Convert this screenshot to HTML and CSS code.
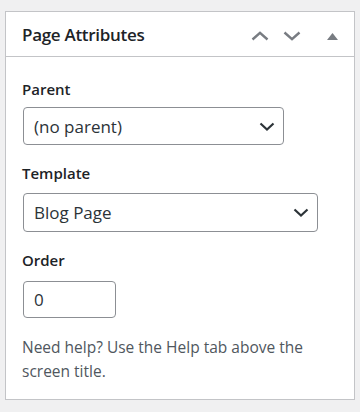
FILE: index.html
```html
<!DOCTYPE html>
<html lang="en">
<head>
    <meta charset="UTF-8">
    <meta name="viewport" content="width=device-width, initial-scale=1.0">
    <title>Page Attributes</title>
    <link rel="stylesheet" href="styles.css">
</head>
<body>
    <div class="postbox">
        <div class="postbox-header">
            <h2 class="hndle">Page Attributes</h2>
            <div class="handle-actions">
                <button class="handle-btn" aria-label="Move up">
                    <svg width="18" height="10" viewBox="0 0 18 10"><path d="M1.5 8.5 L9 1.8 L16.5 8.5" fill="none" stroke="#787c82" stroke-width="2.4"/></svg>
                </button>
                <button class="handle-btn" aria-label="Move down">
                    <svg width="18" height="10" viewBox="0 0 18 10"><path d="M1.5 1.5 L9 8.2 L16.5 1.5" fill="none" stroke="#787c82" stroke-width="2.4"/></svg>
                </button>
                <button class="handle-btn toggle" aria-label="Toggle panel">
                    <svg width="11" height="7" viewBox="0 0 11 7"><path d="M5.5 0 L11 7 L0 7 Z" fill="#787c82"/></svg>
                </button>
            </div>
        </div>

        <div class="inside">
            <label class="field-label" for="parent_id">Parent</label>
            <div class="select-wrap parent">
                <select id="parent_id">
                    <option>(no parent)</option>
                </select>
                <svg class="caret" width="16" height="10" viewBox="0 0 16 10"><path d="M1.5 1.5 L8 7.5 L14.5 1.5" fill="none" stroke="#2c3338" stroke-width="2.2"/></svg>
            </div>

            <label class="field-label" for="page_template">Template</label>
            <div class="select-wrap template">
                <select id="page_template">
                    <option>Blog Page</option>
                </select>
                <svg class="caret" width="16" height="10" viewBox="0 0 16 10"><path d="M1.5 1.5 L8 7.5 L14.5 1.5" fill="none" stroke="#2c3338" stroke-width="2.2"/></svg>
            </div>

            <label class="field-label order" for="menu_order">Order</label>
            <input class="order-input" type="text" id="menu_order" value="0">

            <p class="help-text">Need help? Use the Help tab above the screen title.</p>
        </div>
    </div>
</body>
</html>
```
FILE: styles.css
```css
* {
    margin: 0;
    padding: 0;
    box-sizing: border-box;
}
body {
    font-family: "Open Sans", "Noto Sans", sans-serif;
    background-color: #f0f0f1;
    color: #1d2327;
    padding: 11px 5px 0;
}
.postbox {
    background: #fff;
    border: 1px solid #c3c4c7;
}
.postbox-header {
    display: flex;
    align-items: center;
    justify-content: space-between;
    height: 45px;
    border-bottom: 1px solid #c3c4c7;
    padding: 0 10px 0 16px;
}
.hndle {
    font-size: 17px;
    font-weight: 600;
    letter-spacing: -0.3px;
    color: #1d2327;
}
.handle-actions {
    display: flex;
    align-items: center;
    padding-top: 4px;
}
.handle-btn {
    background: none;
    border: 0;
    width: 32px;
    height: 32px;
    display: flex;
    align-items: center;
    justify-content: center;
}
.handle-btn.toggle {
    margin-left: 12px;
    width: 24px;
}
.inside {
    display: flex;
    flex-direction: column;
    align-items: flex-start;
    padding: 22px 16px 16px;
}
.field-label {
    font-size: 15px;
    font-weight: 600;
    line-height: 20px;
    color: #1d2327;
    margin-bottom: 8px;
}
.select-wrap.template + .field-label {
    margin-bottom: 11px;
}
.select-wrap.parent + .field-label {
    margin-bottom: 10px;
}
.select-wrap {
    position: relative;
    margin-left: 1px;
    margin-bottom: 18px;
}
.select-wrap.parent {
    width: 261px;
}
.select-wrap.template {
    width: 295px;
}
.select-wrap select {
    appearance: none;
    -webkit-appearance: none;
    display: block;
    width: 100%;
    height: 38px;
    border: 1px solid #8c8f94;
    border-radius: 4px;
    background: #fff;
    font-family: inherit;
    font-size: 17px;
    color: #2c3338;
    padding: 0 30px 0 10px;
}
.select-wrap.template select {
    height: 39px;
}
.caret {
    position: absolute;
    right: 9px;
    top: 15px;
    pointer-events: none;
}
.order-input {
    margin-left: 1px;
    width: 93px;
    height: 37px;
    border: 1px solid #8c8f94;
    border-radius: 4px;
    font-family: inherit;
    font-size: 17px;
    color: #2c3338;
    padding: 0 10px;
    margin-bottom: 17px;
}
.help-text {
    font-size: 15.5px;
    line-height: 24px;
    color: #50575e;
}
```
